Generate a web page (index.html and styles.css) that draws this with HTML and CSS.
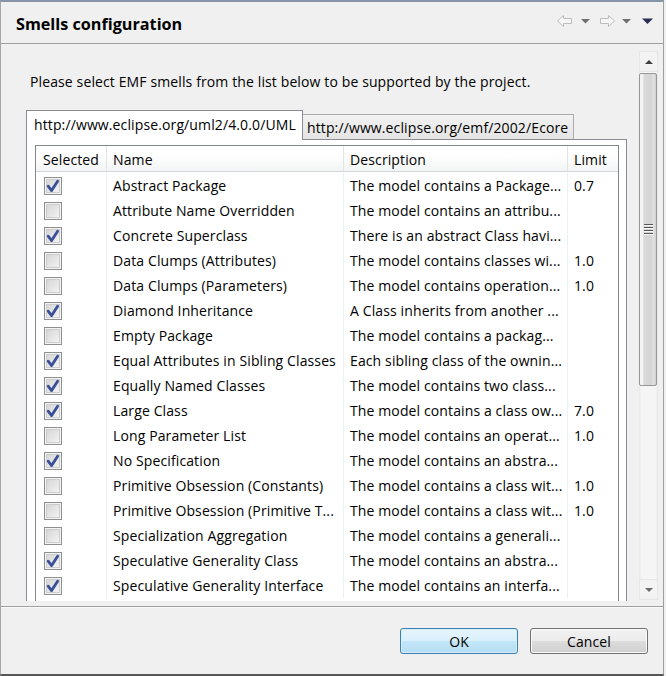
FILE: index.html
```html
<!DOCTYPE html>
<html>
<head>
<meta charset="utf-8">
<title>Smells configuration</title>
<link rel="stylesheet" href="styles.css">
</head>
<body>
<div class="window">
  <header class="titlebar">
    <h1 class="title">Smells configuration</h1>
    <svg class="nav" width="96" height="12" viewBox="0 0 96 12">
      <path d="M0.5 6 L6.5 0.5 V3.5 H14.5 V8.5 H6.5 V11.5 Z" fill="#f7f7f7" stroke="#bcbcbc"/>
      <path d="M24 4 H33 L28.5 8.5 Z" fill="#6f6f6f"/>
      <path d="M57.5 6 L51.5 0.5 V3.5 H43.5 V8.5 H51.5 V11.5 Z" fill="#f7f7f7" stroke="#bcbcbc"/>
      <path d="M65 4 H74 L69.5 8.5 Z" fill="#6f6f6f"/>
      <path d="M85 3.5 H96 L90.5 9 Z" fill="#2c2c52"/>
    </svg>
  </header>
  <div class="main">
    <div class="viewport">
      <p class="intro">Please select EMF smells from the list below to be supported by the project.</p>
      <div class="tabfolder">
        <div class="tabs">
          <div class="tab active">http://www.eclipse.org/uml2/4.0.0/UML</div>
          <div class="tab">http://www.eclipse.org/emf/2002/Ecore</div>
        </div>
        <div class="panel">
          <div class="table">
            <div class="row head">
              <div class="cell">Selected</div>
              <div class="cell">Name</div>
              <div class="cell">Description</div>
              <div class="cell">Limit</div>
            </div>
            <div class="body">
              <div class="row"><div class="cell sel"><span class="cb on"><svg viewBox="0 0 16 16"><path d="M3.2 8.2 L6.6 12.6 L12.6 3.2"/></svg></span></div><div class="cell">Abstract Package</div><div class="cell">The model contains a Package...</div><div class="cell">0.7</div></div>
              <div class="row"><div class="cell sel"><span class="cb"></span></div><div class="cell">Attribute Name Overridden</div><div class="cell">The model contains an attribu...</div><div class="cell"></div></div>
              <div class="row"><div class="cell sel"><span class="cb on"><svg viewBox="0 0 16 16"><path d="M3.2 8.2 L6.6 12.6 L12.6 3.2"/></svg></span></div><div class="cell">Concrete Superclass</div><div class="cell">There is an abstract Class havi...</div><div class="cell"></div></div>
              <div class="row"><div class="cell sel"><span class="cb"></span></div><div class="cell">Data Clumps (Attributes)</div><div class="cell">The model contains classes wi...</div><div class="cell">1.0</div></div>
              <div class="row"><div class="cell sel"><span class="cb"></span></div><div class="cell">Data Clumps (Parameters)</div><div class="cell">The model contains operation...</div><div class="cell">1.0</div></div>
              <div class="row"><div class="cell sel"><span class="cb on"><svg viewBox="0 0 16 16"><path d="M3.2 8.2 L6.6 12.6 L12.6 3.2"/></svg></span></div><div class="cell">Diamond Inheritance</div><div class="cell">A Class inherits from another ...</div><div class="cell"></div></div>
              <div class="row"><div class="cell sel"><span class="cb"></span></div><div class="cell">Empty Package</div><div class="cell">The model contains a packag...</div><div class="cell"></div></div>
              <div class="row"><div class="cell sel"><span class="cb on"><svg viewBox="0 0 16 16"><path d="M3.2 8.2 L6.6 12.6 L12.6 3.2"/></svg></span></div><div class="cell">Equal Attributes in Sibling Classes</div><div class="cell">Each sibling class of the ownin...</div><div class="cell"></div></div>
              <div class="row"><div class="cell sel"><span class="cb on"><svg viewBox="0 0 16 16"><path d="M3.2 8.2 L6.6 12.6 L12.6 3.2"/></svg></span></div><div class="cell">Equally Named Classes</div><div class="cell">The model contains two class...</div><div class="cell"></div></div>
              <div class="row"><div class="cell sel"><span class="cb on"><svg viewBox="0 0 16 16"><path d="M3.2 8.2 L6.6 12.6 L12.6 3.2"/></svg></span></div><div class="cell">Large Class</div><div class="cell">The model contains a class ow...</div><div class="cell">7.0</div></div>
              <div class="row"><div class="cell sel"><span class="cb"></span></div><div class="cell">Long Parameter List</div><div class="cell">The model contains an operat...</div><div class="cell">1.0</div></div>
              <div class="row"><div class="cell sel"><span class="cb on"><svg viewBox="0 0 16 16"><path d="M3.2 8.2 L6.6 12.6 L12.6 3.2"/></svg></span></div><div class="cell">No Specification</div><div class="cell">The model contains an abstra...</div><div class="cell"></div></div>
              <div class="row"><div class="cell sel"><span class="cb"></span></div><div class="cell">Primitive Obsession (Constants)</div><div class="cell">The model contains a class wit...</div><div class="cell">1.0</div></div>
              <div class="row"><div class="cell sel"><span class="cb"></span></div><div class="cell">Primitive Obsession (Primitive T...</div><div class="cell">The model contains a class wit...</div><div class="cell">1.0</div></div>
              <div class="row"><div class="cell sel"><span class="cb"></span></div><div class="cell">Specialization Aggregation</div><div class="cell">The model contains a generali...</div><div class="cell"></div></div>
              <div class="row"><div class="cell sel"><span class="cb on"><svg viewBox="0 0 16 16"><path d="M3.2 8.2 L6.6 12.6 L12.6 3.2"/></svg></span></div><div class="cell">Speculative Generality Class</div><div class="cell">The model contains an abstra...</div><div class="cell"></div></div>
              <div class="row"><div class="cell sel"><span class="cb on"><svg viewBox="0 0 16 16"><path d="M3.2 8.2 L6.6 12.6 L12.6 3.2"/></svg></span></div><div class="cell">Speculative Generality Interface</div><div class="cell">The model contains an interfa...</div><div class="cell"></div></div>
            </div>
          </div>
        </div>
      </div>
    </div>
    <div class="vscroll">
      <div class="sb-btn"><span class="arrow up"></span></div>
      <div class="track"><div class="thumb"><span class="grip"></span></div></div>
      <div class="sb-btn"><span class="arrow down"></span></div>
    </div>
  </div>
  <footer class="buttons">
    <button class="btn default">OK</button>
    <button class="btn">Cancel</button>
  </footer>
</div>
</body>
</html>
```
FILE: styles.css
```css
* { box-sizing: border-box; }
html, body { margin: 0; padding: 0; }
body {
  width: 666px;
  height: 676px;
  overflow: hidden;
  background: #f0f0f0;
  font-family: "Open Sans", "Noto Sans", sans-serif;
  font-size: 14px;
  letter-spacing: 0.12px;
  color: #000;
}
.window {
  width: 664px;
  height: 676px;
  display: flex;
  flex-direction: column;
  border-top: 2px solid #8494a9;
  border-left: 1px solid #a6a6a6;
  border-right: 1px solid #a0a0a0;
  border-bottom: 2px solid #575757;
  background: #f0f0f0;
}
.titlebar {
  flex: none;
  height: 42px;
  display: flex;
  justify-content: space-between;
  align-items: flex-start;
  padding-left: 15px;
  border-bottom: 1px solid #a0a0a0;
}
.title {
  margin: 0;
  padding-top: 12px;
  font-size: 16.2px;
  font-weight: 700;
  line-height: 20px;
  letter-spacing: 0;
}
.nav {
  display: block;
  margin-top: 13px;
  margin-right: 10px;
}
.main {
  flex: none;
  height: 562px;
  display: flex;
  align-items: flex-start;
}
.viewport {
  width: 638px;
  height: 557px;
  overflow: hidden;
  padding: 28px 0 0 25px;
}
.intro {
  margin: 0 0 19px 4px;
  line-height: 19px;
  white-space: nowrap;
}
.tabfolder { width: 601px; }
.tabs {
  display: flex;
  align-items: flex-end;
  height: 29px;
}
.tab {
  white-space: nowrap;
  line-height: 19px;
}
.tab.active {
  position: relative;
  z-index: 1;
  width: 277px;
  height: 30px;
  margin-bottom: -1px;
  padding: 4px 0 0 7px;
  background: #fff;
  border: 1px solid #898c95;
  border-bottom: none;
}
.tab:not(.active) {
  width: 271px;
  height: 25px;
  padding: 3px 0 0 4px;
  background: linear-gradient(#f2f2f2, #e4e4e4);
  border: 1px solid #acacac;
  border-left: none;
  border-bottom: none;
  overflow: hidden;
}
.panel {
  width: 601px;
  height: 480px;
  background: #fff;
  border: 1px solid #898c95;
  padding: 5px 7px 0 8px;
}
.table {
  width: 584px;
  height: 500px;
  border: 1px solid #828790;
  border-bottom: none;
}
.row {
  display: grid;
  grid-template-columns: 70px 237px 224px 51px;
  height: 25px;
}
.cell {
  padding-left: 6px;
  line-height: 25px;
  white-space: nowrap;
  overflow: hidden;
}
.cell + .cell { border-left: 1px solid #edf1f7; }
.row.head {
  height: 26px;
  background: linear-gradient(#ffffff 35%, #f3f4f5 100%);
  border-bottom: 1px solid #d6d6d6;
}
.row.head .cell {
  line-height: 22px;
  padding-top: 3px;
}
.row.head .cell:first-child { padding-left: 7px; }
.row.head .cell + .cell { border-left: 1px solid #e3e3e3; }
.body { padding-top: 1px; }
.cell.sel {
  padding-left: 8px;
  display: flex;
  align-items: center;
}
.cb {
  display: block;
  width: 18px;
  height: 18px;
  border: 1px solid #8e8f8f;
  background: linear-gradient(135deg, #d2d2d2 0%, #e6e6e6 55%, #f8f8f8 100%);
  box-shadow: inset 0 0 0 1px #f3f3f3, inset 0 0 0 2px #cdcdcd;
}
.cb svg {
  display: block;
  width: 16px;
  height: 16px;
}
.cb path {
  fill: none;
  stroke: #3a4f98;
  stroke-width: 2.8;
  stroke-linecap: round;
  stroke-linejoin: round;
}
.vscroll {
  flex: none;
  width: 19px;
  height: 549px;
  margin-top: 7px;
  display: flex;
  flex-direction: column;
}
.sb-btn {
  flex: none;
  height: 21px;
  display: flex;
  align-items: center;
  justify-content: center;
  background: #f3f3f3;
  border: 1px solid #e6e6e6;
}
.arrow {
  width: 0;
  height: 0;
  border-left: 4.5px solid transparent;
  border-right: 4.5px solid transparent;
}
.arrow.up { border-bottom: 4px solid #404040; }
.arrow.down { border-top: 4px solid #6a6a6a; }
.track {
  flex: 1;
  padding-top: 1px;
  background: linear-gradient(90deg, #e6e6e6 0, #f5f5f5 2px, #f5f5f5 calc(100% - 2px), #e6e6e6 100%);
}
.thumb {
  width: 18px;
  height: 313px;
  border: 1px solid #979797;
  border-radius: 2px;
  background: linear-gradient(90deg, #f4f4f4 0, #f4f4f4 15%, #d9d9d9 25%, #d4d4d4 70%, #e3e3e3 82%, #d0d0d0 100%);
  display: flex;
  align-items: center;
  justify-content: center;
}
.grip {
  display: block;
  width: 9px;
  height: 11px;
  background: repeating-linear-gradient(#555 0, #555 1px, #f8f8f8 1px, #f8f8f8 2px, transparent 2px, transparent 3px);
}
.buttons {
  flex: none;
  height: 68px;
  border-top: 1px solid #a0a0a0;
  box-shadow: inset 0 1px 0 #fafafa;
  display: flex;
  justify-content: flex-end;
  align-items: flex-start;
  gap: 12px;
  padding: 21px 15px 0 0;
}
.btn {
  width: 118px;
  height: 26px;
  margin: 0;
  padding: 0;
  font-family: "Open Sans", "Noto Sans", sans-serif;
  font-size: 14px;
  letter-spacing: 0.12px;
  color: #000;
  border: 1px solid #707070;
  border-radius: 3px;
  background: linear-gradient(#f2f2f2 0%, #ebebeb 50%, #dddddd 50%, #cfcfcf 100%);
  box-shadow: inset 0 0 0 1px #fcfcfc;
}
.btn.default {
  border-color: #3c7fb1;
  background: linear-gradient(#e6f5fd 0%, #d9f0fc 50%, #c4e6f8 50%, #b6def5 100%);
  box-shadow: inset 0 0 0 1px #d5eefb;
}
```
